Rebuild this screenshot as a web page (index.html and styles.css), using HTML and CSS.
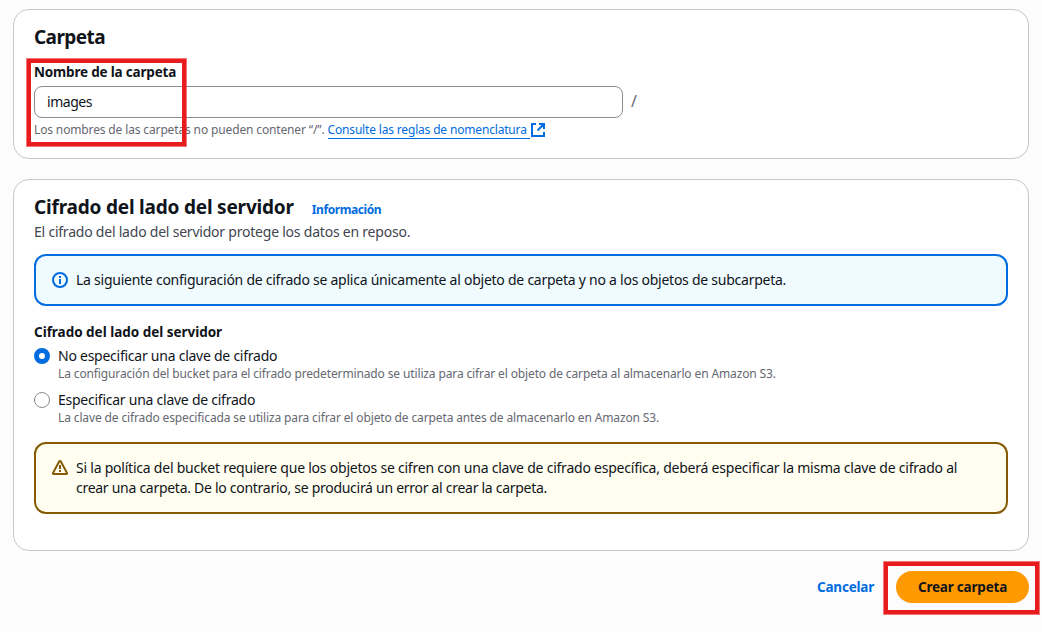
FILE: index.html
```
<!DOCTYPE html>
<html lang="es">
<head>
<meta charset="utf-8">
<title>Crear carpeta</title>
<link rel="stylesheet" href="styles.css">
</head>
<body>
<main class="page">
  <section class="card card-folder">
    <h2 class="heading"><span class="t-carpeta">Carpeta</span></h2>
    <div class="field">
      <label class="label" for="name"><span class="t-label">Nombre de la carpeta</span></label>
      <div class="input-row">
        <div class="input" id="name"><span class="t-images">images</span></div>
        <span class="slash">/</span>
      </div>
      <p class="hint"><span class="t-hint">Los nombres de las carpetas no pueden contener “/”.</span>
        <a class="link"><span class="t-link">Consulte las reglas de nomenclatura</span></a>
        <svg class="external" viewBox="0 0 16 16"><path d="M6 2H2v12h12v-4M9 2h5v5M14 2 7.5 8.5"/></svg>
      </p>
      <div class="mark mark-field"></div>
    </div>
  </section>

  <section class="card card-crypt">
    <div class="title-row">
      <h2 class="heading"><span class="t-crypt">Cifrado del lado del servidor</span></h2>
      <a class="info"><span class="t-info">Información</span></a>
    </div>
    <p class="description"><span class="t-desc">El cifrado del lado del servidor protege los datos en reposo.</span></p>
    <div class="alert alert-info">
      <svg class="icon" viewBox="0 0 16 16"><circle cx="8" cy="8" r="7"/><path d="M8 7v5M8 4v2"/></svg>
      <p class="alert-text"><span class="t-note">La siguiente configuración de cifrado se aplica únicamente al objeto de carpeta y no a los objetos de subcarpeta.</span></p>
    </div>
    <h3 class="label label-group"><span class="t-group">Cifrado del lado del servidor</span></h3>
    <div class="option">
      <span class="radio radio-on"></span>
      <div class="option-body">
        <span class="option-title t-opt">No especificar una clave de cifrado</span>
        <span class="option-hint">La configuración del bucket para el cifrado predeterminado se utiliza para cifrar el objeto de carpeta al almacenarlo en Amazon S3.</span>
      </div>
    </div>
    <div class="option">
      <span class="radio"></span>
      <div class="option-body">
        <span class="option-title t-opt">Especificar una clave de cifrado</span>
        <span class="option-hint">La clave de cifrado especificada se utiliza para cifrar el objeto de carpeta antes de almacenarlo en Amazon S3.</span>
      </div>
    </div>
    <div class="alert alert-warning">
      <svg class="icon" viewBox="0 0 16 16"><path d="M6.9 2 1.2 12.6Q.6 14 2 14h12q1.4 0 .8-1.4L9.1 2Q8-.1 6.9 2zM8 5v4M8 10v2"/></svg>
      <p class="alert-text"><span class="t-warn1">Si la política del bucket requiere que los objetos se cifren con una clave de cifrado específica, deberá especificar la misma clave de cifrado al</span><br><span class="t-warn2">crear una carpeta. De lo contrario, se producirá un error al crear la carpeta.</span></p>
    </div>
  </section>

  <footer class="actions">
    <a class="cancel"><span class="t-cancel">Cancelar</span></a>
    <button class="create"><span class="t-create">Crear carpeta</span><span class="mark mark-create"></span></button>
  </footer>
</main>
</body>
</html>
```
FILE: styles.css
```
* { box-sizing: border-box; }
body { margin: 0; background: #fcfcfd; color: #0f141a; font: 14px/20px "Noto Sans", sans-serif; }
h2, h3, p { margin: 0; }
span { white-space: nowrap; }
.page { height: 632px; padding: 9px 13px 0; overflow: hidden; }
.card { background: #fff; border: 1px solid #c6c6cd; border-radius: 16px; padding: 15px 20px 0; }
.card-folder { height: 150px; }
.card-crypt { height: 372px; margin-top: 20px; }
.heading { font-size: 19px; line-height: 24px; font-weight: 700; }
.label { display: block; font-size: 13.5px; line-height: 20px; font-weight: 700; }
.field { position: relative; margin-top: 13px; }
.input-row { display: flex; align-items: center; gap: 8px; margin-top: 4px; }
.input { width: 589px; height: 32px; padding: 5px 12px; border: 1px solid #8c8c94; border-radius: 8px; }
.slash { color: #656871; font-size: 16px; line-height: 20px; margin-top: -3px; }
.hint { display: flex; align-items: center; height: 16px; margin-top: 4px; color: #656871; font-size: 12px; line-height: 16px; }
.link { width: 202px; margin-left: 3px; color: #006ce0; border-bottom: 1px solid #006ce0; }
.external { width: 16px; height: 16px; fill: none; stroke: #006ce0; stroke-width: 2; }
.mark { position: absolute; border: 4px solid #e81c1f; box-shadow: 0 0 0 1px rgba(232, 28, 31, 0.6); pointer-events: none; }
.mark-field { left: -7px; top: -3px; width: 159px; height: 87px; }
.title-row { display: flex; align-items: baseline; gap: 18px; height: 24px; }
.info { color: #006ce0; font-size: 12px; line-height: 20px; font-weight: 700; }
.description { margin-top: 3px; color: #424650; }
.alert { display: flex; gap: 8px; padding: 14px 16px; border: 2px solid; border-radius: 12px; }
.alert-info { height: 52px; margin-top: 12px; border-color: #006ce0; background: #f0fbff; }
.alert-warning { height: 72px; margin-top: 16px; border-color: #855900; background: #fffef0; }
.icon { flex: none; width: 16px; height: 16px; margin-top: 2px; fill: none; stroke: #006ce0; stroke-width: 2; }
.alert-warning .icon { stroke: #855900; }
.alert-text { color: #0f141a; }
.label-group { margin-top: 16px; }
.option { display: flex; gap: 8px; margin-top: 8px; height: 36px; }
.label-group + .option { margin-top: 4px; }
.radio { width: 16px; height: 16px; margin-top: 2px; border: 1px solid #8c8c94; border-radius: 50%; background: #fff; }
.radio-on { border: 5px solid #006ce0; }
.option-body { display: flex; flex-direction: column; }
.option-hint { color: #656871; font-size: 12px; line-height: 16px; letter-spacing: -0.13px; }
.actions { display: flex; justify-content: flex-end; align-items: center; gap: 22px; margin-top: 20px; }
.cancel { color: #006ce0; font-weight: 700; font-size: 13.5px; }
.create { position: relative; width: 133px; height: 32px; padding: 0; border: 0; border-radius: 20px; background: #ff9900; color: #0f141a; font: 700 13.5px/20px "Noto Sans", sans-serif; }
.mark-create { left: -12px; top: -9px; width: 155px; height: 52px; }

/* Tracking per text run */
.t-carpeta { letter-spacing: -0.58px; }
.t-crypt { letter-spacing: -0.2px; }
.t-label { letter-spacing: -0.18px; }
.t-images { letter-spacing: -0.45px; }
.t-hint { letter-spacing: -0.14px; }
.t-link { letter-spacing: -0.17px; }
.t-info { letter-spacing: -0.42px; }
.t-desc { letter-spacing: -0.22px; }
.t-note { letter-spacing: -0.25px; }
.t-group { letter-spacing: -0.02px; }
.t-opt { letter-spacing: -0.25px; }
.t-warn1 { letter-spacing: -0.226px; }
.t-warn2 { letter-spacing: -0.28px; }
.t-cancel { letter-spacing: -0.22px; }
.t-create { letter-spacing: -0.2px; }
```
